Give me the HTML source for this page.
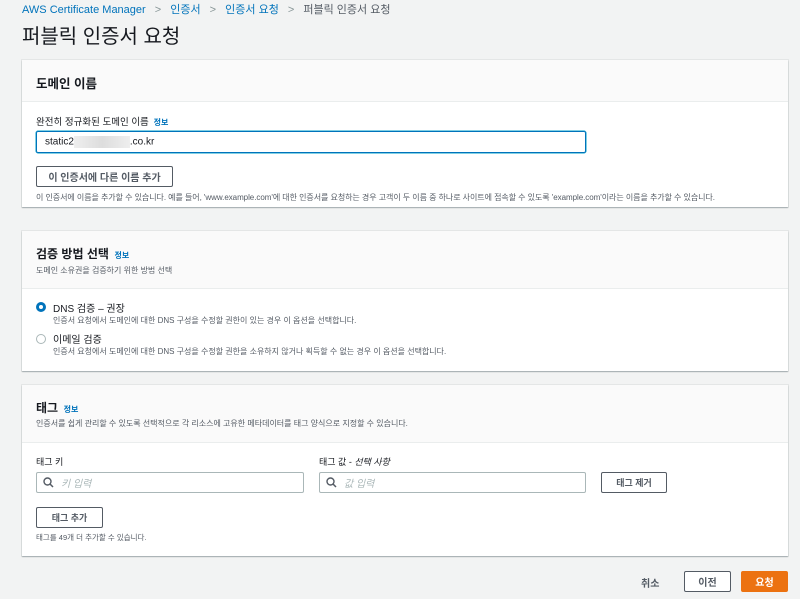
<!DOCTYPE html>
<html><head><meta charset="utf-8"><style>
*{box-sizing:border-box;margin:0;padding:0}
body{width:800px;height:599px;background:#f2f3f3;font-family:"Liberation Sans","Noto Sans CJK KR",sans-serif;color:#16191f;position:relative;overflow:hidden}
.a{position:absolute;white-space:nowrap}
.panel{position:absolute;left:22px;width:766px;background:#fff;box-shadow:0 1px 1px rgba(0,28,36,.3),0 0 0 1px #e4e6e6}
.ph{position:absolute;left:0;top:0;width:100%;background:#fafafa;border-bottom:1px solid #eaeded}
.blue{color:#0073bb}
.info{color:#0073bb;font-size:8px;font-weight:bold}
.btn{position:absolute;border:1px solid #545b64;border-radius:2px;background:#fff;font-size:10px;font-weight:bold;color:#545b64;display:flex;align-items:center;justify-content:center}
.inp{position:absolute;border:1px solid #aab7b8;border-radius:2px;background:#fff;font-size:10px;color:#aab7b8;font-style:italic;display:flex;align-items:center;padding-left:24px}
.sm{font-size:8px;color:#545b64}
</style></head><body>
<div class="a blue" style="left:22px;top:1px;font-size:11px">AWS Certificate Manager <span style="color:#879596;margin:0 6px">&gt;</span> 인증서 <span style="color:#879596;margin:0 6px">&gt;</span> 인증서 요청 <span style="color:#879596;margin:0 6px">&gt;</span> <span style="color:#545b64">퍼블릭 인증서 요청</span></div>
<div class="a" style="left:22px;top:20px;font-size:20px">퍼블릭 인증서 요청</div>

<div class="panel" style="top:60px;height:147px">
 <div class="ph" style="height:42px"></div>
 <div class="a" style="left:14px;top:13px;font-size:12.5px;font-weight:bold">도메인 이름</div>
 <div class="a" style="left:14px;top:54px;font-size:9.5px">완전히 정규화된 도메인 이름 <span class="info">&nbsp;정보</span></div>
 <div style="position:absolute;left:14px;top:71px;width:550px;height:22px;border:1px solid #0073bb;box-shadow:0 0 0 0.5px #00a1c9;border-radius:2px;font-size:10px;padding:4px 8px">static2<span style="display:inline-block;width:56px;height:12px;background:linear-gradient(90deg,#eee,#ddd,#eee);vertical-align:middle"></span>.co.kr</div>
 <div class="btn" style="left:14px;top:106px;width:137px;height:21px">이 인증서에 다른 이름 추가</div>
 <div class="a sm" style="left:14px;top:132px;font-size:8px;letter-spacing:-0.05px">이 인증서에 이름을 추가할 수 있습니다. 예를 들어, 'www.example.com'에 대한 인증서를 요청하는 경우 고객이 두 이름 중 하나로 사이트에 접속할 수 있도록 'example.com'이라는 이름을 추가할 수 있습니다.</div>
</div>

<div class="panel" style="top:231px;height:140px">
 <div class="ph" style="height:58px"></div>
 <div class="a" style="left:14px;top:14px;font-size:12px;font-weight:bold">검증 방법 선택 <span class="info">&nbsp;정보</span></div>
 <div class="a sm" style="left:14px;top:34px">도메인 소유권을 검증하기 위한 방법 선택</div>
 <div style="position:absolute;left:14px;top:71px;width:10px;height:10px;border-radius:50%;border:3px solid #0073bb;background:#fff"></div>
 <div class="a" style="left:31px;top:69px;font-size:10px">DNS 검증 – 권장</div>
 <div class="a sm" style="left:31px;top:84px">인증서 요청에서 도메인에 대한 DNS 구성을 수정할 권한이 있는 경우 이 옵션을 선택합니다.</div>
 <div style="position:absolute;left:14px;top:103px;width:10px;height:10px;border-radius:50%;border:1px solid #aab7b8;background:#fff"></div>
 <div class="a" style="left:31px;top:100px;font-size:10px">이메일 검증</div>
 <div class="a sm" style="left:31px;top:115px">인증서 요청에서 도메인에 대한 DNS 구성을 수정할 권한을 소유하지 않거나 획득할 수 없는 경우 이 옵션을 선택합니다.</div>
</div>

<div class="panel" style="top:385px;height:171px">
 <div class="ph" style="height:58px"></div>
 <div class="a" style="left:14px;top:14px;font-size:12px;font-weight:bold">태그 <span class="info">&nbsp;정보</span></div>
 <div class="a sm" style="left:14px;top:33px">인증서를 쉽게 관리할 수 있도록 선택적으로 각 리소스에 고유한 메타데이터를 태그 양식으로 지정할 수 있습니다.</div>
 <div class="a" style="left:14px;top:70px;font-size:9px">태그 키</div>
 <div class="a" style="left:297px;top:70px;font-size:9px">태그 값 - <i>선택 사항</i></div>
 <div class="inp" style="left:14px;top:87px;width:268px;height:21px">키 입력</div>
 <div class="inp" style="left:297px;top:87px;width:267px;height:21px">값 입력</div>
 <svg style="position:absolute;left:21px;top:92px" width="11" height="11" viewBox="0 0 11 11"><circle cx="4.5" cy="4.5" r="3.5" fill="none" stroke="#545b64" stroke-width="1.4"/><path d="M7 7l3 3" stroke="#545b64" stroke-width="1.5"/></svg>
 <svg style="position:absolute;left:304px;top:92px" width="11" height="11" viewBox="0 0 11 11"><circle cx="4.5" cy="4.5" r="3.5" fill="none" stroke="#545b64" stroke-width="1.4"/><path d="M7 7l3 3" stroke="#545b64" stroke-width="1.5"/></svg>
 <div class="btn" style="left:579px;top:87px;width:66px;height:21px;font-size:9px">태그 제거</div>
 <div class="btn" style="left:14px;top:122px;width:67px;height:21px;font-size:9px">태그 추가</div>
 <div class="a sm" style="left:14px;top:147px;font-size:7.5px">태그를 49개 더 추가할 수 있습니다.</div>
</div>

<div class="a" style="left:641px;top:575px;font-size:10px;font-weight:bold;color:#545b64">취소</div>
<div class="btn" style="left:684px;top:571px;width:47px;height:21px">이전</div>
<div class="btn" style="left:741px;top:571px;width:47px;height:21px;background:#ec7211;border-color:#ec7211;color:#fff">요청</div>
</body></html>
